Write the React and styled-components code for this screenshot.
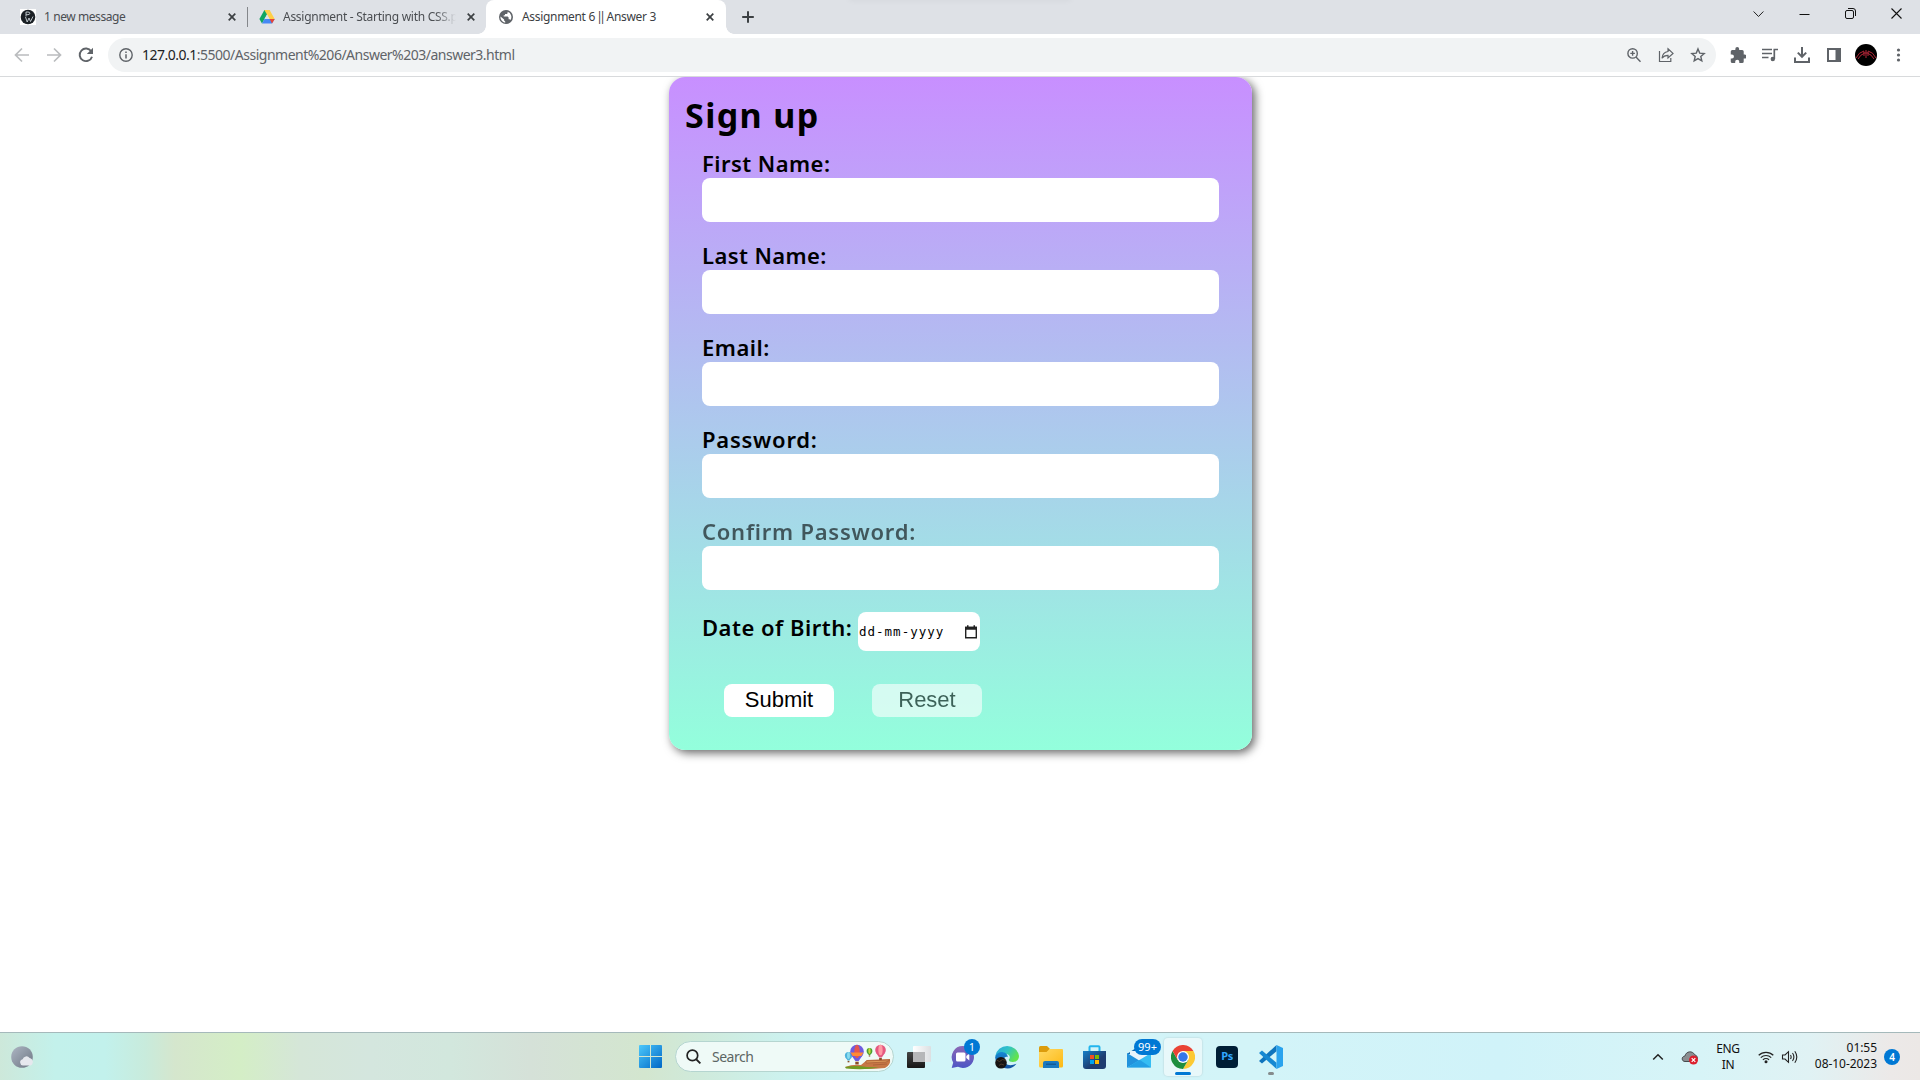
import React from 'react';
import styled, { createGlobalStyle } from 'styled-components';

const Global = createGlobalStyle`
  * { box-sizing: border-box; }
  html, body { margin: 0; padding: 0; background: #fff; overflow: hidden; }
  body { font-family: "Noto Sans", "Open Sans", sans-serif; color: #3c4043; }
  svg { display: block; flex: none; }
`;

const Screen = styled.div`
  width: 1920px;
  height: 1080px;
  display: flex;
  flex-direction: column;
  overflow: hidden;
  background: #fff;
`;

/* ---------- browser tabs ---------- */
const TabStrip = styled.div`
  height: 34px;
  flex: none;
  display: flex;
  background: #dee1e6;
  position: relative;
`;
const TopShade = styled.div`
  position: absolute;
  left: 849px;
  top: -3px;
  width: 222px;
  height: 2px;
  box-shadow: 0 0 6px rgba(0, 0, 0, 0.12);
`;
const Tab = styled.div`
  width: ${(p) => p.$w}px;
  height: 34px;
  padding-left: ${(p) => p.$pad}px;
  display: flex;
  align-items: center;
  position: relative;
  background: ${(p) => (p.$active ? '#fff' : 'transparent')};
  border-radius: 8px 8px 0 0;
  &::before, &::after {
    content: "";
    display: ${(p) => (p.$active ? 'block' : 'none')};
    position: absolute;
    bottom: 0;
    width: 8px;
    height: 8px;
  }
  &::before { left: -8px; background: radial-gradient(circle at 0 0, transparent 7.5px, #fff 8px); }
  &::after { right: -8px; background: radial-gradient(circle at 100% 0, transparent 7.5px, #fff 8px); }
`;
const TabTitle = styled.div`
  width: ${(p) => p.$w}px;
  margin-left: ${(p) => p.$ml}px;
  font-size: 12px;
  line-height: 18px;
  letter-spacing: ${(p) => p.$ls}px;
  white-space: nowrap;
  color: ${(p) => (p.$active ? '#3c4043' : '#4a4d51')};
  mask-image: ${(p) => (p.$fade ? 'linear-gradient(90deg, #000 88%, transparent)' : 'none')};
`;
const Bars = styled.span`
  letter-spacing: -3.6px;
  margin: 0 1.5px 0 -1.5px;
`;
const TabDivider = styled.div`
  width: 1px;
  height: 20px;
  margin-top: 7px;
  background: #84878b;
`;
const TabClose = styled.div`
  margin-left: ${(p) => p.$ml}px;
`;
const NewTab = styled.div`
  padding: 10px 0 0 15px;
`;
const WindowButtons = styled.div`
  margin-left: auto;
  padding: 8px 18px 0 0;
  display: flex;
  gap: 35px;
`;

/* ---------- toolbar ---------- */
const Toolbar = styled.div`
  height: 43px;
  flex: none;
  display: flex;
  align-items: center;
  background: #fff;
  border-bottom: 1px solid #d8dadc;
  position: relative;
  z-index: 2;
`;
const NavButtons = styled.div`
  width: 108px;
  padding-left: 14px;
  display: flex;
  gap: 16px;
`;
const Omnibox = styled.div`
  width: 1608px;
  height: 34px;
  border-radius: 17px;
  background: #f1f3f4;
  display: flex;
  align-items: center;
  padding: 0 10px 0 11px;
`;
const Url = styled.div`
  margin-left: 9px;
  font-size: 14px;
  line-height: 20px;
  letter-spacing: -0.5px;
  color: #5f6368;
  b { font-weight: 400; color: #202124; }
`;
const OmniIcons = styled.div`
  margin-left: auto;
  display: flex;
  gap: 16px;
`;
const Extensions = styled.div`
  display: flex;
  align-items: center;
  margin-left: 14px;
  gap: 16px;
`;
const Avatar = styled.div`
  width: 22px;
  height: 22px;
  margin: 0 -3px;
  border-radius: 50%;
  overflow: hidden;
  background: #000;
`;

/* ---------- sign-up page ---------- */
const Page = styled.main`
  flex: 1;
  display: flex;
  justify-content: center;
  align-items: flex-start;
  padding-left: 1px;
`;
const Card = styled.form`
  width: 583px;
  height: 673px;
  padding: 13px 33px 0;
  border-radius: 16px;
  background: linear-gradient(#c88fff, #93ffdc);
  box-shadow: 3px 3px 10px rgba(0, 0, 0, 0.6);
  color: #000;
`;
const Title = styled.h1`
  margin: 0 0 8px -17px;
  font-size: 34px;
  line-height: 50px;
  font-weight: 700;
  letter-spacing: 1.4px;
`;
const Fields = styled.div`
  display: flex;
  flex-direction: column;
  gap: 18px;
`;
const Field = styled.div`
  display: flex;
  flex-direction: column;
`;
const Label = styled.label`
  height: 30px;
  font-size: 22px;
  line-height: 30px;
  font-weight: 600;
  letter-spacing: ${(p) => p.$ls}px;
  white-space: nowrap;
  opacity: ${(p) => (p.$dim ? 0.6 : 1)};
`;
const TextInput = styled.input`
  width: 517px;
  height: 44px;
  border: 0;
  border-radius: 8px;
  background: #fff;
  outline: none;
`;
const DateRow = styled.div`
  margin-top: 22px;
  display: flex;
  align-items: flex-start;
`;
const DateLabelBox = styled.div`
  width: 156px;
  display: flex;
`;
const DateInput = styled.div`
  width: 122px;
  height: 39px;
  padding: 0 3px 0 1px;
  border-radius: 8px;
  background: #fff;
  display: flex;
  align-items: center;
  justify-content: space-between;
  font: 12.5px/16px "DejaVu Sans Mono", monospace;
  letter-spacing: 1px;
`;
const Buttons = styled.div`
  margin: 33px 0 0 22px;
  display: flex;
  gap: 38px;
`;
const FormButton = styled.button`
  width: 110px;
  height: 33px;
  padding: 0 0 2px;
  border: 0;
  border-radius: 8px;
  background: #fff;
  color: #000;
  font: 22px/30px "Liberation Sans", Arial, sans-serif;
  opacity: ${(p) => (p.$dim ? 0.6 : 1)};
`;

/* ---------- taskbar ---------- */
const Taskbar = styled.div`
  height: 48px;
  flex: none;
  display: flex;
  align-items: center;
  position: relative;
  border-top: 1px solid #a5b9bb;
  background: linear-gradient(90deg, #cde8da 0, #c3f1eb 55px, #c2f1ec 105px, #c8ebdc 145px, #d5e6cd 175px, #d4eec6 240px, #d5e6d8 300px, #d4e6de 370px, #d2e7dd 450px, #d5e1d8 530px, #d3e6cf 645px, #cfeadb 700px, #ccf2f0 790px, #d0f4f8 880px, #d3f4f8 1250px, #d0f3f9 1500px, #d7f4f7 1700px, #e0f2f4 1810px, #ece9e8 1890px, #ece8e6 1920px);
`;
const Weather = styled.div`
  width: 639px;
  padding-left: 11px;
`;
const SearchBox = styled.div`
  width: 219px;
  height: 31px;
  margin: 0 3px 0 13px;
  padding: 0 2px 0 10px;
  border-radius: 16px;
  border: 1px solid #b5d5d0;
  background: #effaf7;
  display: flex;
  align-items: center;
  font-size: 14px;
  letter-spacing: -0.5px;
  color: #5c6664;
`;
const SearchText = styled.span`
  margin-left: 11px;
  margin-top: -1px;
  flex: 1;
`;
const Slot = styled.div`
  width: 44px;
  height: 47px;
  display: flex;
  align-items: center;
  justify-content: center;
  position: relative;
`;
const ActivePlate = styled.div`
  width: 38px;
  height: 38px;
  border-radius: 4px;
  background: #e8f8fa;
  box-shadow: 0 0 1px 1px rgba(190, 215, 220, 0.5);
  display: flex;
  align-items: center;
  justify-content: center;
`;
const RunMark = styled.div`
  position: absolute;
  bottom: 5px;
  left: ${(p) => (p.$active ? 14 : 19)}px;
  width: ${(p) => (p.$active ? 16 : 6)}px;
  height: 3px;
  border-radius: 2px;
  background: ${(p) => (p.$active ? '#0078d4' : '#858b8c')};
`;
const Badge = styled.div`
  position: absolute;
  top: 6px;
  left: ${(p) => p.$x}px;
  width: ${(p) => p.$w}px;
  height: 16px;
  border-radius: 8px;
  background: #0078d4;
  color: #fff;
  font-size: 11px;
  line-height: 16px;
  text-align: center;
`;
const PsTile = styled.div`
  width: 22px;
  height: 22px;
  border-radius: 4px;
  background: #001e36;
  color: #31a8ff;
  font-size: 11px;
  line-height: 20px;
  font-weight: 700;
  letter-spacing: -0.4px;
  text-align: center;
`;
const Tray = styled.div`
  margin-left: auto;
  padding-right: 20px;
  height: 47px;
  display: flex;
  align-items: center;
  color: #111;
  font-size: 12px;
  line-height: 16px;
`;
const Language = styled.div`
  width: 30px;
  margin: 0 15px 0 15px;
  text-align: center;
  letter-spacing: -0.4px;
`;
const Clock = styled.div`
  width: 66px;
  margin: -1px 7px 0 12px;
  text-align: right;
  letter-spacing: -0.05px;
  white-space: nowrap;
`;
const Count = styled.div`
  width: 16px;
  height: 16px;
  border-radius: 50%;
  background: #0078d4;
  color: #fff;
  font-size: 10px;
  font-weight: 600;
  text-align: center;
`;

const Svg = ({ w = 16, h = w, box, children }) => (
  <svg width={w} height={h} viewBox={box || `0 0 ${w} ${h}`} fill="none">{children}</svg>
);
const Cross = () => (
  <Svg w={8}><path d="M.7.7l6.6 6.6M7.3.7L.7 7.3" stroke="#3c4043" strokeWidth="1.7" /></Svg>
);

const fields = [
  { label: 'First Name:', ls: 0.45 },
  { label: 'Last Name:', ls: 0.4 },
  { label: 'Email:', ls: 0.5 },
  { label: 'Password:', ls: 0.75 },
  { label: 'Confirm Password:', ls: 0.75, dim: true },
];

function BrowserTabs() {
  return (
    <TabStrip>
      <TopShade />
      <Tab $w={247} $pad={20}>
        <Svg w={16}>
          <rect width="16" height="16" fill="#fff" />
          <circle cx="8" cy="8" r="7.3" fill="#1b2025" />
          <path d="M6 7.500V3h2q1.800 0 1.800 1.300T8 5.700H6M5.500 8l1.700 5L9 9l1.500 3.500L13 7.500" stroke="#cdd5d9" strokeWidth=".9" />
        </Svg>
        <TabTitle $w={170} $ml={8} $ls={-0.42}>1 new message</TabTitle>
        <TabClose $ml={14}><Cross /></TabClose>
      </Tab>
      <TabDivider />
      <Tab $w={238} $pad={11}>
        <Svg w={16}>
          <path d="M5.400 1h5.200L8 5.600 3 14.400.400 10z" fill="#11a661" />
          <path d="M5.400 1h5.200l5.100 9h-5.200z" fill="#ffcf48" />
          <path d="M3 14.500L5.500 10h10.200L13 14.500z" fill="#4688f4" />
          <path d="M10.700 10h5L13 14.500z" fill="#ea4335" />
          <path d="M5.500 10L8 5.600l2.600 4.400z" fill="#dee1e6" />
        </Svg>
        <TabTitle $w={173} $ml={8} $ls={-0.28} $fade>Assignment - Starting with CSS.p</TabTitle>
        <TabClose $ml={11}><Cross /></TabClose>
      </Tab>
      <Tab $w={240} $pad={13} $active>
        <Svg w={14}>
          <circle cx="7" cy="7" r="7" fill="#5f6368" />
          <path d="M1.500 6.400l3.600 3.100v1l1.100 1.100v1.100A5.700 5.700 0 011.500 6.400zM8.600 1.700v1c0 .8-.6 1.300-1.400 1.300H6v1.300H4.700v1.300h3.900l1 1v1.600h1l.9.8A5.600 5.600 0 008.600 1.700z" fill="#fff" />
        </Svg>
        <TabTitle $w={170} $ml={9} $ls={-0.32} $active>Assignment 6 <Bars>||</Bars> Answer 3</TabTitle>
        <TabClose $ml={14}><Cross /></TabClose>
      </Tab>
      <NewTab>
        <Svg w={14}><path d="M7 1.200v11.600M1.200 7h11.600" stroke="#3c4043" strokeWidth="2" /></Svg>
      </NewTab>
      <WindowButtons>
        <Svg w={11}><path d="M.6 3.500l4.900 5 4.900-5" stroke="#222" /></Svg>
        <Svg w={11}><path d="M.5 6.500h10" stroke="#111" /></Svg>
        <Svg w={11}>
          <rect x=".5" y="2.500" width="8" height="8" rx="1.500" stroke="#111" />
          <path d="M3 .5h5a2.500 2.500 0 012.500 2.500v5" stroke="#111" />
        </Svg>
        <Svg w={11}><path d="M.5.5l10 10M10.500.5l-10 10" stroke="#111" strokeWidth="1.100" /></Svg>
      </WindowButtons>
    </TabStrip>
  );
}

function BrowserToolbar() {
  return (
    <Toolbar>
      <NavButtons>
        <Svg w={16}><path d="M15 8H2M8 1.500L1.500 8 8 14.500" stroke="#babcbe" strokeWidth="1.700" /></Svg>
        <Svg w={16}><path d="M1 8h13M8 1.500L14.500 8 8 14.500" stroke="#babcbe" strokeWidth="1.700" /></Svg>
        <Svg w={16}>
          <path d="M13.200 4.300A6.300 6.300 0 1014 9.700" stroke="#5f6368" strokeWidth="1.900" />
          <path d="M15 .8v6.200H8.800z" fill="#5f6368" />
        </Svg>
      </NavButtons>
      <Omnibox>
        <Svg w={14}>
          <circle cx="7" cy="7" r="6.200" stroke="#5f6368" strokeWidth="1.400" />
          <path d="M7 6.200v4.200M7 3.400v1.500" stroke="#5f6368" strokeWidth="1.500" />
        </Svg>
        <Url><b>127.0.0.1</b>:5500/Assignment%206/Answer%203/answer3.html</Url>
        <OmniIcons>
          <Svg w={16}>
            <circle cx="6.600" cy="6.400" r="4.700" stroke="#5f6368" strokeWidth="1.400" />
            <path d="M10 10l4.500 4.700M4.300 6.400h4.600M6.600 4.100v4.600" stroke="#5f6368" strokeWidth="1.400" />
          </Svg>
          <Svg w={16}>
            <path d="M1.500 4v10.500h11.300V11" stroke="#5f6368" strokeWidth="1.200" />
            <path d="M10 1.800l5 4.600-5 4.500V8.300c-3 0-4.800 1-6 2.900.3-3.500 2.300-6.200 6-6.700z" stroke="#5f6368" strokeWidth="1.200" />
          </Svg>
          <Svg w={16}>
            <path d="M8 1.900l1.700 4.200 4.500.4-3.400 3 1 4.400L8 11.600l-3.800 2.300 1-4.400-3.400-3 4.500-.4z" stroke="#5f6368" strokeWidth="1.400" />
          </Svg>
        </OmniIcons>
      </Omnibox>
      <Extensions>
        <Svg w={16} box="1 1 21 21">
          <path fill="#5f6368" d="M20.500 11H19V7a2 2 0 00-2-2h-4V3.500a2.500 2.500 0 00-5 0V5H4a2 2 0 00-2 2v3.800h1.500a2.700 2.700 0 010 5.400H2V20c0 1.100.9 2 2 2h3.800v-1.500a2.700 2.700 0 015.400 0V22H17a2 2 0 002-2v-4h1.500a2.500 2.500 0 000-5z" />
        </Svg>
        <Svg w={16}>
          <path d="M0 2.500h10M0 6.500h10M0 10.500h6.500M12.300 2v10M11.500 2.500H16" stroke="#5f6368" strokeWidth="1.700" />
          <circle cx="10.800" cy="12" r="2.200" fill="#5f6368" />
        </Svg>
        <Svg w={16}>
          <path d="M8 0v9M3.800 5.600L8 9.800l4.200-4.200M1 10.500V15h14v-4.500" stroke="#5f6368" strokeWidth="2" />
        </Svg>
        <Svg w={16}>
          <rect x="2" y="2" width="12" height="12" stroke="#5f6368" strokeWidth="2" />
          <path d="M9.500 2H14v12H9.500z" fill="#5f6368" />
        </Svg>
        <Avatar>
          <Svg w={22}>
            <path d="M1 14q3-6 8-7M3 15q3-5 6-5.500M21 14q-3-6-8-7M19 15q-3-5-6-5.500M11 6v8M9 7.500v4.500M13 7.500v4.500M8.500 9h5" stroke="#b52638" strokeWidth="1" />
          </Svg>
        </Avatar>
        <Svg w={16}>
          <circle cx="8.500" cy="3" r="1.600" fill="#5f6368" />
          <circle cx="8.500" cy="8" r="1.600" fill="#5f6368" />
          <circle cx="8.500" cy="13" r="1.600" fill="#5f6368" />
        </Svg>
      </Extensions>
    </Toolbar>
  );
}

function SignUp() {
  return (
    <Page>
      <Card>
        <Title>Sign up</Title>
        <Fields>
          {fields.map((f) => (
            <Field key={f.label}>
              <Label $ls={f.ls} $dim={f.dim}>{f.label}</Label>
              <TextInput />
            </Field>
          ))}
        </Fields>
        <DateRow>
          <DateLabelBox><Label $ls={0.5}>Date of Birth:</Label></DateLabelBox>
          <DateInput>
            dd-mm-yyyy
            <Svg w={12} h={14}>
              <path d="M.7 2.500h10.600v10.300H.7z" stroke="#222" strokeWidth="1.400" />
              <path d="M0 1.800h12v3H0zM2 .3h1.500v2H2zM8.500.3H10v2H8.500z" fill="#222" />
            </Svg>
          </DateInput>
        </DateRow>
        <Buttons>
          <FormButton type="button">Submit</FormButton>
          <FormButton type="button" $dim>Reset</FormButton>
        </Buttons>
      </Card>
    </Page>
  );
}

const Balloon = ({ x, y, r, a, b }) => (
  <g>
    <circle cx={x} cy={y} r={r} fill={a} />
    <polygon points={`${x - r * 0.85},${y + r * 0.5} ${x + r * 0.85},${y + r * 0.5} ${x + r * 0.25},${y + r * 1.4} ${x - r * 0.25},${y + r * 1.4}`} fill={a} />
    <ellipse cx={x} cy={y} rx={r * 0.4} ry={r} fill={b} />
    <rect x={x - r * 0.25} y={y + r * 1.5} width={r * 0.5} height={r * 0.4} fill="#8a4b25" />
  </g>
);

function WindowsTaskbar() {
  return (
    <Taskbar>
      <Weather>
        <Svg w={24}>
          <defs>
            <linearGradient id="moon" x1="0" y1="0" x2="1" y2="1"><stop stopColor="#adb6c4" /><stop offset="1" stopColor="#6e7683" /></linearGradient>
          </defs>
          <circle cx="11" cy="12" r="10.800" fill="url(#moon)" />
          <path d="M12 20.500a3.200 3.200 0 01-.4-6.300 4 4 0 017-1.300 4 4 0 01.800 7.600z" fill="#e6e8ee" />
        </Svg>
      </Weather>
      <Svg w={23}>
        <defs>
          <linearGradient id="win" gradientUnits="userSpaceOnUse" x1="0" y1="0" x2="23" y2="23"><stop stopColor="#4cc8fb" /><stop offset="1" stopColor="#0067c6" /></linearGradient>
        </defs>
        <path d="M1 0h10v11H0V1q0-1 1-1zM12 0h10q1 0 1 1v10H12zM0 12h11v11H1q-1 0-1-1zM12 12h11v10q0 1-1 1H12z" fill="url(#win)" />
      </Svg>
      <SearchBox>
        <Svg w={15}>
          <circle cx="6.400" cy="6.400" r="5.300" stroke="#222" strokeWidth="1.700" />
          <path d="M10.300 10.300l4.100 4.100" stroke="#222" strokeWidth="1.900" />
        </Svg>
        <SearchText>Search</SearchText>
        <Svg w={47} h={26}>
          <path d="M1 23q8-3 16-2l6-5 23-1q1 6-5 9-18 2-37 0z" fill="#c77745" />
          <path d="M1 23q10-2 22 0l12 .5q-15 3-33 1z" fill="#6f9a22" />
          <path d="M22 17l24-1-4 2-20 1zM29 21l14-1" fill="#e09b5a" stroke="#a45a35" strokeWidth=".7" />
          <Balloon x={4.500} y={11.500} r={3.600} a="#4fb3dc" b="#8adcee" />
          <Balloon x={13} y={7.500} r={6.800} a="#6f5be0" b="#e4574f" />
          <path d="M6.600 8.500h12.800l-2 3.500H8.600z" fill="#ff8a35" />
          <Balloon x={25.500} y={7} r={2.900} a="#4aa02e" b="#c9d83a" />
          <Balloon x={36.500} y={6} r={5.300} a="#e5587f" b="#ff9aa4" />
        </Svg>
      </SearchBox>
      <Slot>
        <Svg w={24} h={22}>
          <defs>
            <linearGradient id="dark" x1="0" y1="0" x2="0" y2="1"><stop stopColor="#444" /><stop offset="1" stopColor="#171717" /></linearGradient>
            <linearGradient id="light" x1="0" y1="0" x2="1" y2="0"><stop stopColor="#fff" /><stop offset="1" stopColor="#dcdfe2" /></linearGradient>
          </defs>
          <rect y="6" width="18" height="16" rx="1" fill="url(#dark)" />
          <rect x="6" width="18" height="16" rx="1" fill="url(#light)" />
          <path d="M6 6h12v10H6z" fill="#b6b7b9" />
        </Svg>
      </Slot>
      <Slot>
        <Svg w={24}>
          <defs>
            <linearGradient id="chat" x1="0" y1="0" x2="0" y2="1"><stop stopColor="#8c68b5" /><stop offset="1" stopColor="#4d55c5" /></linearGradient>
          </defs>
          <path d="M12 1a11 11 0 11-5 20.800L.700 23l1.500-5.500A11 11 0 0112 1z" fill="url(#chat)" />
          <rect x="5" y="7.500" width="9.500" height="9" rx="1.500" fill="#fff" />
          <path d="M15.300 11l3-2.500v7L15.300 13z" fill="#fff" />
        </Svg>
        <Badge $x={23} $w={16}>1</Badge>
      </Slot>
      <Slot>
        <Svg w={24}>
          <defs>
            <linearGradient id="edgeA" x1="0" y1="0" x2="1" y2=".5"><stop stopColor="#2aa5dc" /><stop offset=".5" stopColor="#30c3c8" /><stop offset="1" stopColor="#62e34d" /></linearGradient>
            <linearGradient id="edgeB" x1="0" y1="0" x2="0" y2="1"><stop stopColor="#1689d4" /><stop offset="1" stopColor="#124f9f" /></linearGradient>
          </defs>
          <path d="M.300 11A12 12 0 0124 11c0 4-3 6-6.300 6-3 0-4.700-1.500-3.500-3 1.700-2.300-.2-5-3.200-5C6 9 3 11 .300 11z" fill="url(#edgeA)" />
          <path d="M.100 12C1.500 8 5 6.700 8 7.200c3.500.5 5 3 4.600 5-1.600-1-3.600.3-3.600 2.800 0 4 5 7 12.500 3.800A12 12 0 01.100 12z" fill="url(#edgeB)" />
          <circle cx="6" cy="17.800" r="5.800" fill="#171313" />
          <path d="M1.500 15l3 1.500 3-2 3.500 1M4 20.500l2-1.500 3 1" stroke="#55402e" strokeWidth=".8" />
        </Svg>
      </Slot>
      <Slot>
        <Svg w={24} h={22}>
          <defs>
            <linearGradient id="fold" x1="0" y1="0" x2="1" y2="1"><stop stopColor="#ffd965" /><stop offset="1" stopColor="#fdb913" /></linearGradient>
          </defs>
          <path d="M0 1.500Q0 0 1.500 0H8l3 3-2 4H0z" fill="#dc9c0c" />
          <path d="M0 6h7.500l3-3H23q1 0 1 1v16q0 1.500-1.500 1.500h-21Q0 21.500 0 20z" fill="url(#fold)" />
          <path d="M4 22v-5q0-2 2-2h12q2 0 2 2v5z" fill="#1b79bf" />
          <path d="M7 17.500h10v1.500H7z" fill="#165b94" />
        </Svg>
      </Slot>
      <Slot>
        <Svg w={24}>
          <defs>
            <linearGradient id="store" x1="0" y1="0" x2="1" y2="1"><stop stopColor="#1680c8" /><stop offset=".6" stopColor="#1e3c70" /></linearGradient>
          </defs>
          <path d="M6.500 7V2.200q0-1 1-1h8q1 0 1 1V7" stroke="#22b5ee" strokeWidth="2" />
          <path d="M0 6h23v15q0 3-3 3H3q-3 0-3-3z" fill="url(#store)" />
          <path d="M7 10h4v4H7z" fill="#f25022" /><path d="M12 10h4v4h-4z" fill="#7fba00" />
          <path d="M7 15h4v4H7z" fill="#00a4ef" /><path d="M12 15h4v4h-4z" fill="#ffb900" />
        </Svg>
      </Slot>
      <Slot>
        <Svg w={24}>
          <path d="M0 9L12 1l12 8z" fill="#1264ad" />
          <path d="M3 6h18v12H3z" fill="#eaf4fb" />
          <path d="M0 8l13 8L0 22.500z" fill="#2292dc" />
          <path d="M24 8v14.500H0z" fill="#36bdf3" />
          <path d="M0 22.500L13 15l11 7.500z" fill="#1c91dd" opacity=".65" />
        </Svg>
        <Badge $x={17} $w={27}>99+</Badge>
      </Slot>
      <Slot>
        <ActivePlate>
          <Svg w={24} box="0 0 48 48">
            <path d="M24 12h20.800A24 24 0 0124 48l10.400-18z" fill="#fcc934" />
            <path d="M3.200 12A24 24 0 0024 48l10.400-18H13.600z" fill="#1e8e3e" />
            <path d="M3.200 12A24 24 0 0144.800 12H24L13.600 30z" fill="#ea4335" />
            <circle cx="24" cy="24" r="12" fill="#fff" />
            <circle cx="24" cy="24" r="9.500" fill="#3477ea" />
          </Svg>
        </ActivePlate>
        <RunMark $active />
      </Slot>
      <Slot><PsTile>Ps</PsTile></Slot>
      <Slot>
        <Svg w={24}>
          <path d="M17.500 0v6.300L3 18.500 0 16z" fill="#0f74bd" />
          <path d="M17.500 24v-6.300L3 5.500 0 8z" fill="#1688d2" />
          <path d="M17.500 0L24 3v18l-6.500 3z" fill="#2aa3ee" />
        </Svg>
        <RunMark />
      </Slot>
      <Tray>
        <Svg w={12}><path d="M1.200 8.500L6 3.700l4.800 4.800" stroke="#222" strokeWidth="1.500" /></Svg>
        <Svg w={34} h={16}>
          <path d="M21 12.500c-3.500 0-4-5 0-5.500 1-5 7.500-5.500 9.500-1.500q3 1 3 4l-4 3z" fill="#8b8e91" stroke="#474b4e" />
          <circle cx="29.500" cy="11" r="4.500" fill="#dc1f2d" />
          <path d="M27.700 9.200l3.600 3.600M31.300 9.200l-3.600 3.600" stroke="#fff" strokeWidth="1.200" />
        </Svg>
        <Language>ENG<br />IN</Language>
        <Svg w={16}>
          <path d="M.700 6.300a10.500 10.500 0 0114.600 0M2.800 8.600a7.500 7.500 0 0110.400 0M4.900 10.900a4.500 4.500 0 016.200 0" stroke="#222" strokeWidth="1.200" />
          <circle cx="8" cy="12.800" r="1.500" fill="#222" />
        </Svg>
        <Svg w={25} h={16}>
          <path d="M8.500 6H11l3.500-3.300v10.600L11 10H8.500z" stroke="#222" strokeWidth="1.100" />
          <path d="M16.500 6q1.300 2 0 4M18.500 4q2.800 4 0 8M20.800 2.300q4 5.700 0 11.400" stroke="#222" strokeWidth="1.100" />
        </Svg>
        <Clock>01:55<br />08-10-2023</Clock>
        <Count>4</Count>
      </Tray>
    </Taskbar>
  );
}

export default function App() {
  return (
    <Screen>
      <Global />
      <BrowserTabs />
      <BrowserToolbar />
      <SignUp />
      <WindowsTaskbar />
    </Screen>
  );
}
